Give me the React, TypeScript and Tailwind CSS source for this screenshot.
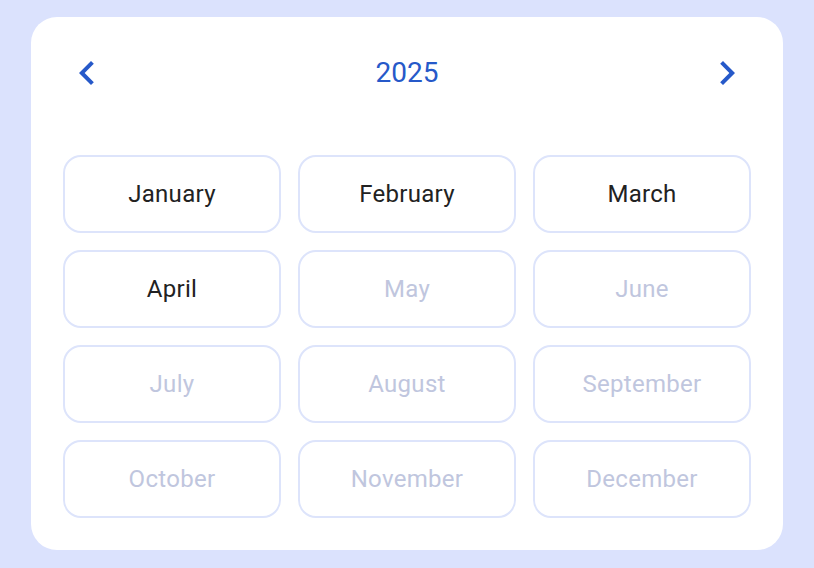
import React from "react";

const months = [
  "January","February","March","April","May","June",
  "July","August","September","October","November","December",
];

export default function App() {
  return (
    <div className="min-h-screen w-full bg-[#dbe2fd] flex justify-center pt-[17px]" style={{ fontFamily: "Roboto, 'Noto Sans', sans-serif" }}>
      <div className="w-[752px] h-[533px] bg-white rounded-[26px] p-8">
        <div className="flex items-center justify-between h-12 mb-[58px]">
          <button className="w-12 h-12 flex items-center justify-center text-[#2659c9]">
            <svg width="48" height="48" viewBox="0 0 24 24" fill="currentColor">
              <path d="M15.41 7.41L14 6l-6 6 6 6 1.41-1.41L10.83 12z" />
            </svg>
          </button>
          <div className="text-[28px] text-[#2659c9] leading-none">2025</div>
          <button className="w-12 h-12 flex items-center justify-center text-[#2659c9]">
            <svg width="48" height="48" viewBox="0 0 24 24" fill="currentColor">
              <path d="M10 6L8.59 7.41 13.17 12l-4.58 4.59L10 18l6-6z" />
            </svg>
          </button>
        </div>
        <div className="grid grid-cols-3 gap-[17px]">
          {months.map((m, i) => (
            <div
              key={m}
              className={`h-[78px] rounded-[18px] border-2 border-[#dde4fb] flex items-center justify-center text-[24px] tracking-[0.3px] ${i < 4 ? "text-[#222222]" : "text-[#c0c6de]"}`}
            >
              {m}
            </div>
          ))}
        </div>
      </div>
    </div>
  );
}
